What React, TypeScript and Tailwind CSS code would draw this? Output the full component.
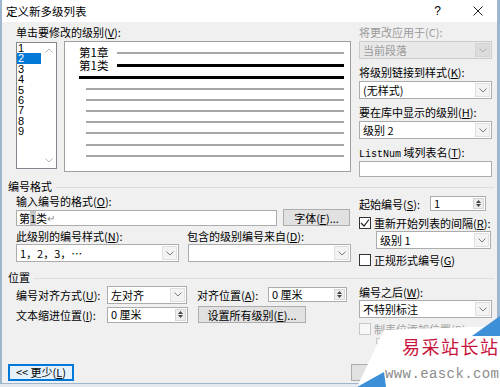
import React from 'react';

const FONT = "font-['Noto_Sans_CJK_SC','Noto_Sans',sans-serif]";

function U({ c }: { c: string }) {
    return <span className="underline underline-offset-1">{c}</span>;
}

function Chevron({ color = '#7a7a7a' }: { color?: string }) {
    return (
        <svg width="8" height="5" viewBox="0 0 8 5">
            <path d="M0.5 0.5 L4 4 L7.5 0.5" fill="none" stroke={color} strokeWidth="1" />
        </svg>
    );
}

function Combo({ text, className = '', disabled = false }: { text: string; className?: string; disabled?: boolean }) {
    return (
        <div
            className={`flex h-[18px] border ${
                disabled ? 'border-[#cccccc] bg-[#e8e8e8] text-[#9a9a9a]' : 'border-[#acacac] bg-white text-black'
            } ${className}`}
        >
            <div className="flex-1 pl-[3px] text-[11px] leading-[16px] whitespace-nowrap overflow-hidden">{text}</div>
            <div
                className={`w-[15px] m-[1px] flex items-center justify-center border ${
                    disabled ? 'border-[#d4d4d4] bg-[#dcdcdc]' : 'border-[#e0e0e0] bg-[#f3f3f3]'
                }`}
            >
                <Chevron color={disabled ? '#b0b0b0' : '#7a7a7a'} />
            </div>
        </div>
    );
}

function Spin({ text, className = '' }: { text: string; className?: string }) {
    return (
        <div className={`flex h-[15px] border border-[#acacac] bg-white ${className}`}>
            <div className="flex-1 pl-[3px] text-[11px] leading-[13px] whitespace-nowrap">{text}</div>
            <div className="w-[11px] my-[1px] mr-[1px] flex flex-col items-center justify-center gap-[1px] bg-[#ececec] border border-[#d6d6d6]">
                <svg width="5" height="3" viewBox="0 0 5 3"><path d="M0 3 L2.5 0 L5 3 Z" fill="#444" /></svg>
                <svg width="5" height="3" viewBox="0 0 5 3"><path d="M0 0 L2.5 3 L5 0 Z" fill="#444" /></svg>
            </div>
        </div>
    );
}

function Btn({ children, className = '' }: { children?: React.ReactNode; className?: string }) {
    return (
        <div className={`flex items-center justify-center border border-[#adadad] bg-[#e1e1e1] text-[11px] leading-[14px] ${className}`}>
            {children}
        </div>
    );
}

function Check({ checked = false, disabled = false }: { checked?: boolean; disabled?: boolean }) {
    return (
        <div
            className={`w-[12px] h-[12px] border flex items-center justify-center ${
                disabled ? 'border-[#c8c8c8] bg-[#f7f7f7]' : 'border-[#333333] bg-white'
            }`}
        >
            {checked && (
                <svg width="10" height="10" viewBox="0 0 10 10">
                    <path d="M1 5 L4 8 L9 1.5" fill="none" stroke="#222" strokeWidth="1.2" />
                </svg>
            )}
        </div>
    );
}

function Label({ children, className = '' }: { children: React.ReactNode; className?: string }) {
    return <div className={`h-[14px] text-[11px] leading-[14px] whitespace-nowrap ${className}`}>{children}</div>;
}

function GroupTitle({ text }: { text: string }) {
    return (
        <div className="-ml-[8px] flex items-center h-[14px]">
            <span className="text-[11px] leading-[14px]">{text}</span>
            <div className="flex-1 h-px bg-[#dcdcdc] ml-[4px] mt-[3px]" />
        </div>
    );
}

export default function App() {
    const levels = ['1', '2', '3', '4', '5', '6', '7', '8', '9'];
    const grayLines = [0, 1, 2, 3, 4, 5, 6];

    return (
        <div className={`w-[500px] h-[387px] relative overflow-hidden bg-[#e4e9ef] text-black ${FONT}`}>
            <div className="h-[384px] border-l-2 border-r-[3px] border-b border-[#9fb6cf] bg-[#f0f0f0] flex flex-col">
                {/* title bar */}
                <div className="h-[22px] bg-white flex items-center pl-[4px] pr-[14px]">
                    <span className="text-[11.5px] leading-[14px]">定义新多级列表</span>
                    <span className="ml-auto text-[12px] leading-[14px] font-['Liberation_Sans',sans-serif]">?</span>
                    <svg className="ml-[32px]" width="10" height="10" viewBox="0 0 10 10">
                        <path d="M0.5 0.5 L9.5 9.5 M9.5 0.5 L0.5 9.5" stroke="#222" strokeWidth="1" />
                    </svg>
                </div>

                <div className="flex-1 flex flex-col pl-[14px] pr-[3px] pt-[3px]">
                    {/* top section */}
                    <div className="flex gap-[8px] h-[153px]">
                        <div className="w-[335px] flex flex-col">
                            <Label>单击要修改的级别(<U c="V" />):</Label>
                            <div className="flex items-start gap-[7px] mt-[2px]">
                                <div className="mt-[1px] w-[41px] h-[127px] border border-[#828790] bg-white flex">
                                    <div className="w-[24px] flex flex-col">
                                        {levels.map(l => (
                                            <div
                                                key={l}
                                                className={`h-[10.4px] text-[11px] leading-[10.4px] pl-[1px] font-['Liberation_Sans',sans-serif] ${
                                                    l === '2' ? 'bg-[#0078d7] text-white' : ''
                                                }`}
                                            >
                                                {l}
                                            </div>
                                        ))}
                                    </div>
                                    <div className="flex-1 flex flex-col items-center justify-between py-[5px]">
                                        <svg width="8" height="5" viewBox="0 0 8 5">
                                            <path d="M0.5 4.5 L4 1 L7.5 4.5" fill="none" stroke="#b5b5b5" />
                                        </svg>
                                        <Chevron color="#b5b5b5" />
                                    </div>
                                </div>
                                <div className="w-[287px] h-[131px] border border-[#a0a0a0] bg-white flex flex-col pt-[4px] pl-[14px] pr-[6px]">
                                    <div className="h-[13px] flex items-center">
                                        <span className="w-[38px] text-[11.5px] leading-[13px]">第1章</span>
                                        <div className="flex-1 h-[2px] bg-[#a6a6a6]" />
                                    </div>
                                    <div className="h-[13px] flex items-center">
                                        <span className="w-[38px] text-[11.5px] leading-[13px]">第1类</span>
                                        <div className="flex-1 h-[3px] bg-black" />
                                    </div>
                                    <div className="h-[11px] flex items-center">
                                        <div className="flex-1 h-[3px] bg-black" />
                                    </div>
                                    {grayLines.map(i => (
                                        <div key={i} className="h-[11.2px] flex items-center pl-[7px]">
                                            <div className="flex-1 h-[2px] bg-[#a6a6a6]" />
                                        </div>
                                    ))}
                                </div>
                            </div>
                        </div>

                        <div className="w-[133px] flex flex-col">
                            <Label className="text-[#9a9a9a]">将更改应用于(C):</Label>
                            <Combo className="mt-[2px]" text="当前段落" disabled />
                            <Label className="mt-[6px]">将级别链接到样式(<U c="K" />):</Label>
                            <Combo className="mt-[2px]" text="(无样式)" />
                            <Label className="mt-[6px]">要在库中显示的级别(<U c="H" />):</Label>
                            <Combo className="mt-[2px]" text="级别 2" />
                            <Label className="mt-[6px]">
                                <span className="font-['Liberation_Mono',monospace] text-[10px]">ListNum</span> 域列表名(<U c="T" />):
                            </Label>
                            <div className="mt-[2px] h-[16px] border border-[#acacac] bg-white" />
                        </div>
                    </div>

                    {/* 编号格式 */}
                    <div className="mt-[1px]">
                        <GroupTitle text="编号格式" />
                    </div>
                    <div className="flex gap-[8px] h-[78px]">
                        <div className="w-[335px] flex flex-col">
                            <Label className="mt-[1px]">输入编号的格式(<U c="O" />):</Label>
                            <div className="flex items-center mt-[1px]">
                                <div className="w-[261px] h-[16px] border border-[#acacac] bg-white pl-[2px] text-[11px] leading-[14px] flex items-center">
                                    第<span className="bg-[#c8c8c8]">1</span>类<span className="text-[#8a8a8a] text-[10px]">↵</span>
                                </div>
                                <Btn className="ml-[6px] w-[67px] h-[17px]">
                                    字体(<U c="F" />)...
                                </Btn>
                            </div>
                            <div className="flex mt-[3px]">
                                <Label className="w-[171px]">此级别的编号样式(<U c="N" />):</Label>
                                <Label>包含的级别编号来自(<U c="D" />):</Label>
                            </div>
                            <div className="flex mt-[1px] gap-[9px]">
                                <Combo className="w-[163px]" text="1，2，3，…" />
                                <Combo className="w-[163px]" text="" />
                            </div>
                        </div>

                        <div className="w-[133px] flex flex-col pt-[3px]">
                            <div className="flex items-center h-[15px]">
                                <Label className="w-[71px]">起始编号(<U c="S" />):</Label>
                                <Spin className="w-[56px]" text="1" />
                            </div>
                            <div className="flex items-center gap-[3px] mt-[5px] h-[14px]">
                                <Check checked />
                                <Label>重新开始列表的间隔(<U c="R" />):</Label>
                            </div>
                            <Combo className="mt-[1px] ml-[17px] w-[115px]" text="级别 1" />
                            <div className="flex items-center gap-[3px] mt-[4px] h-[14px]">
                                <Check />
                                <Label>正规形式编号(<U c="G" />)</Label>
                            </div>
                        </div>
                    </div>

                    {/* 位置 */}
                    <div className="mt-[-1px]">
                        <GroupTitle text="位置" />
                    </div>
                    <div className="flex gap-[8px] h-[60px]">
                        <div className="w-[335px] flex flex-col pt-[2px]">
                            <div className="flex items-center h-[17px]">
                                <Label className="w-[91px]">编号对齐方式(<U c="U" />):</Label>
                                <Combo className="w-[80px]" text="左对齐" />
                                <Label className="ml-[10px] w-[71px]">对齐位置(<U c="A" />):</Label>
                                <Spin className="w-[79px]" text="0 厘米" />
                            </div>
                            <div className="flex items-center h-[17px] mt-[3px]">
                                <Label className="w-[91px]">文本缩进位置(<U c="I" />):</Label>
                                <Spin className="w-[81px] h-[16px]" text="0 厘米" />
                                <Btn className="ml-[10px] w-[108px] h-[17px]">
                                    设置所有级别(<U c="E" />)...
                                </Btn>
                            </div>
                        </div>
                        <div className="w-[133px] flex flex-col pt-[1px]">
                            <Label>编号之后(<U c="W" />):</Label>
                            <Combo className="mt-[1px]" text="不特别标注" />
                            <div className="flex items-center gap-[3px] mt-[4px] h-[14px]">
                                <Check disabled />
                                <Label className="text-[#a0a0a0]">制表位添加位置(B):</Label>
                            </div>
                            <div className="ml-[17px] mt-[2px] w-[70px] h-[15px] border border-[#cccccc] bg-[#f0f0f0]" />
                        </div>
                    </div>

                    {/* bottom buttons (right ones lie under the watermark) */}
                    <div className="flex items-center mt-[20px]">
                        <div className="-ml-[8px] w-[66px] h-[17px] border-2 border-[#0078d7] bg-[#e5f1fb] flex items-center justify-center text-[11px] leading-[13px]">
                            &lt;&lt; 更少(<U c="L" />)
                        </div>
                        <Btn className="ml-auto w-[67px] h-[17px]" />
                        <Btn className="ml-[7px] mr-[2px] w-[67px] h-[17px]" />
                    </div>
                </div>
            </div>

            {/* watermark overlay */}
            <div className="absolute left-[330px] top-[312px] w-[170px] h-[75px]">
                <svg className="absolute inset-0" width="170" height="75" viewBox="0 0 170 75">
                    <polygon points="54,18 170,14 170,75 27,75" fill="#ffffff" />
                    <polygon points="142,24 170,4 170,24" fill="#3d8fd6" />
                    <polygon points="27,75 54,60 56,75" fill="#3d8fd6" />
                </svg>
                <div className="absolute left-[72px] top-[23px] text-[18px] leading-[22px] tracking-[1.5px] text-[#c8143c] whitespace-nowrap">
                    易采站长站
                </div>
                <div className="absolute left-[55px] top-[55px] text-[14px] leading-[14px] tracking-[0.4px] text-[#8c8c8c] whitespace-nowrap font-['Liberation_Mono',monospace]">
                    www.easck.com
                </div>
            </div>
        </div>
    );
}
